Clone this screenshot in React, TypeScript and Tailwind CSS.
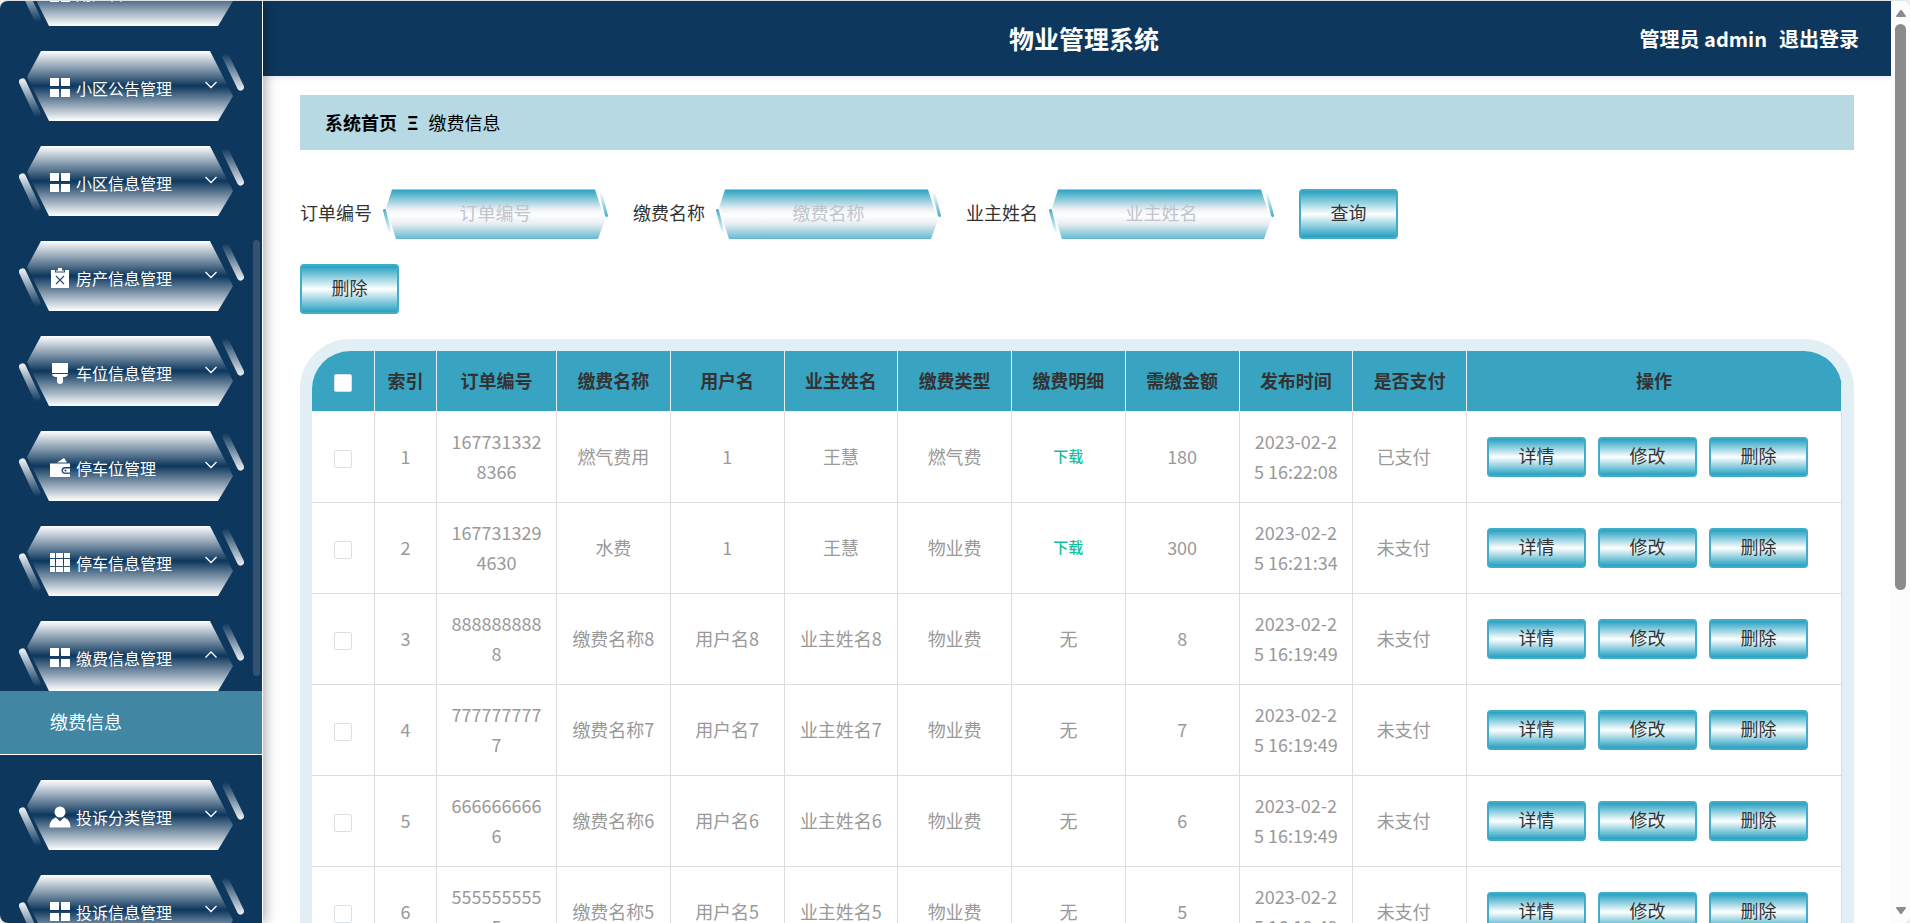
import React, { useState } from 'react';
import clsx from 'clsx';

type IconName = 'menu' | 'release' | 'brush' | 'wallet' | 'grid' | 'user';

interface MenuEntry {
  icon: IconName;
  label: string;
  children?: string[];
}

interface Payment {
  id: string;
  name: string;
  user: string;
  owner: string;
  type: string;
  file: boolean;
  amount: number;
  time: string;
  paid: string;
}

const menu: MenuEntry[] = [
  { icon: 'menu', label: '用户管理' },
  { icon: 'menu', label: '小区公告管理' },
  { icon: 'menu', label: '小区信息管理' },
  { icon: 'release', label: '房产信息管理' },
  { icon: 'brush', label: '车位信息管理' },
  { icon: 'wallet', label: '停车位管理' },
  { icon: 'grid', label: '停车信息管理' },
  { icon: 'menu', label: '缴费信息管理', children: ['缴费信息'] },
  { icon: 'user', label: '投诉分类管理' },
  { icon: 'menu', label: '投诉信息管理' },
];

const filler = (n: number): Payment => ({
  id: String(n).repeat(10),
  name: `缴费名称${n}`,
  user: `用户名${n}`,
  owner: `业主姓名${n}`,
  type: '物业费',
  file: false,
  amount: n,
  time: '2023-02-25 16:19:49',
  paid: '未支付',
});

const payments: Payment[] = [
  { id: '1677313328366', name: '燃气费用', user: '1', owner: '王慧', type: '燃气费', file: true, amount: 180, time: '2023-02-25 16:22:08', paid: '已支付' },
  { id: '1677313294630', name: '水费', user: '1', owner: '王慧', type: '物业费', file: true, amount: 300, time: '2023-02-25 16:21:34', paid: '未支付' },
  ...[8, 7, 6, 5].map(filler),
];

const columns = ['订单编号', '缴费名称', '用户名', '业主姓名', '缴费类型', '缴费明细', '需缴金额', '发布时间', '是否支付'];

const MenuIcon: React.FC<{ name: IconName }> = ({ name }) => (
  <svg className="relative h-[22px] w-[22px] shrink-0" viewBox="0 0 22 22" fill="#fff" aria-hidden="true">
    {name === 'menu' && <path d="M1 1h9v8H1zM12 1h9v8h-9zM1 12h9v8H1zM12 12h9v8h-9z" />}
    {name === 'grid' && (
      <path d="M1 1h5v5H1zM7 1h7v5H7zM15 1h6v5h-6zM1 7h5v7H1zM7 7h7v7H7zM15 7h6v7h-6zM1 15h5v5H1zM7 15h7v5H7zM15 15h6v5h-6z" />
    )}
    {name === 'release' && (
      <>
        <path d="M2 3h4v2.5h10V3h4v18H2z" />
        <path d="M7 3.500h2V1h4v2.500h2v1H7z" />
        <path d="M7 9l8 8M15 9l-8 8" stroke="#2c4f73" strokeWidth="1.2" />
      </>
    )}
    {name === 'brush' && <path d="M3 1h16v10H3zM3 12h16q-.3 2.700-3 3h-2v4a3 3 0 0 1-6 0v-4H6q-2.700-.3-3-3z" />}
    {name === 'wallet' && (
      <>
        <path d="M1 6.500h20v3.500h-5a3 3 0 0 0 0 7h5v3H1z" />
        <path d="M8 5.500L15 1l3 4.500z" />
        <path d="M16 11.500h5v4h-5a2 2 0 0 1 0-4z" />
        <circle cx="16.500" cy="13.500" r="1" fill="#1c4166" />
      </>
    )}
    {name === 'user' && (
      <>
        <circle cx="11" cy="6" r="5.500" />
        <path d="M0.500 21.500c0-6 3-9 6.500-10l4 4 4-4c3.500 1 6.500 4 6.500 10z" />
      </>
    )}
  </svg>
);

// Hexagon plate with a fading stroke on either side
const MenuPlate = () => (
  <svg className="absolute inset-0 h-full w-full" viewBox="0 0 225 70" preserveAspectRatio="none" aria-hidden="true">
    <defs>
      <linearGradient id="plate" x1="0" y1="0" x2="0" y2="1">
        <stop offset="0" stopColor="#fff" />
        <stop offset="0.5" stopColor="#0d375d" />
        <stop offset="1" stopColor="#fff" />
      </linearGradient>
      <linearGradient id="fadeDown" gradientUnits="userSpaceOnUse" x1="0" y1="28" x2="0" y2="66">
        <stop offset="0" stopColor="#eef1f4" />
        <stop offset="1" stopColor="#0d375d" />
      </linearGradient>
      <linearGradient id="fadeUp" gradientUnits="userSpaceOnUse" x1="0" y1="2" x2="0" y2="40">
        <stop offset="0" stopColor="#0d375d" />
        <stop offset="1" stopColor="#eef1f4" />
      </linearGradient>
    </defs>
    <path d="M22 0H191L214 45L199 70H30L8 26z" fill="url(#plate)" />
    <path d="M3.500 31L18 62" stroke="url(#fadeDown)" strokeWidth="7" strokeLinecap="round" />
    <path d="M207 6L221.500 36" stroke="url(#fadeUp)" strokeWidth="7" strokeLinecap="round" />
  </svg>
);

const SideMenu = () => (
  <aside className="relative z-10 w-[263px] shrink-0 overflow-hidden border-r border-white bg-[#0d375d] shadow-[2px_0_12px_rgba(0,0,0,0.35)]">
    <nav className="-mt-[45px]">
      {menu.map((item) => (
        <div key={item.label} className="mb-[25px]">
          <button type="button" className="relative ml-[19px] flex h-[70px] w-[225px] items-center gap-[5px] pl-[30px] pr-[27px] pt-1 text-base text-white">
            <MenuPlate />
            <MenuIcon name={item.icon} />
            <span className="relative flex-1 text-left">{item.label}</span>
            <svg className="relative -mt-1.5 h-2 w-3" viewBox="0 0 12 8" fill="none" stroke="#fff" strokeWidth="1.3" aria-hidden="true">
              <path d={item.children ? 'M0.500 6.500L6 1l5.500 5.500' : 'M0.500 1L6 6.500L11.500 1'} />
            </svg>
          </button>
          {item.children?.map((child) => (
            <a key={child} href="#" className="flex h-16 items-center border-b border-white bg-[#4186a3] pb-1 pl-[50px] text-lg text-white">
              {child}
            </a>
          ))}
        </div>
      ))}
    </nav>
    <div className="absolute right-[2px] top-[239px] h-[436px] w-[7px] rounded-full bg-[#36506f]" />
  </aside>
);

const GlossButton: React.FC<{ tall?: boolean; children: React.ReactNode }> = ({ tall, children }) => (
  <button
    type="button"
    className={clsx(
      'w-[99px] shrink-0 rounded border-2 border-[#41acc8] bg-[linear-gradient(#26a1c1,#fff,#26a1c1)] text-lg leading-none text-[#333]',
      tall ? 'h-[50px] pb-1' : 'h-10 pb-1',
    )}
  >
    {children}
  </button>
);

const SearchField: React.FC<{ label: string }> = ({ label }) => (
  <label className="flex items-center gap-[11px] text-lg text-[#333]">
    <span className="pb-1">{label}</span>
    <span className="relative block h-[50px] w-[225px]">
      <svg className="absolute inset-0 h-full w-full" viewBox="0 0 225 50" preserveAspectRatio="none" aria-hidden="true">
        <defs>
          <linearGradient id="field" x1="0" y1="0" x2="0" y2="1">
            <stop offset="0" stopColor="#28a2c2" />
            <stop offset="0.4" stopColor="#eef1f3" />
            <stop offset="0.52" stopColor="#fff" />
            <stop offset="0.7" stopColor="#e6edf1" />
            <stop offset="1" stopColor="#62b9d1" />
          </linearGradient>
          <linearGradient id="tickDown" gradientUnits="userSpaceOnUse" x1="0" y1="20" x2="0" y2="45">
            <stop offset="0" stopColor="#45aeca" />
            <stop offset="1" stopColor="#fff" />
          </linearGradient>
          <linearGradient id="tickUp" gradientUnits="userSpaceOnUse" x1="0" y1="3" x2="0" y2="28">
            <stop offset="0" stopColor="#fff" />
            <stop offset="1" stopColor="#45aeca" />
          </linearGradient>
        </defs>
        <path d="M9 0.500H212L222 31L215 50H13L3 19z" fill="url(#field)" />
        <path d="M1.500 21.500L7 43" stroke="url(#tickDown)" strokeWidth="3" strokeLinecap="round" />
        <path d="M218 5L223.500 26.500" stroke="url(#tickUp)" strokeWidth="3" strokeLinecap="round" />
      </svg>
      <input
        type="text"
        placeholder={label}
        className="relative block h-full w-full bg-transparent pb-1 text-center text-lg text-[#333] outline-none placeholder:text-[#c0c4cc]"
      />
    </span>
  </label>
);

const Check: React.FC<{ label: string; checked: boolean; onChange: () => void }> = ({ label, checked, onChange }) => (
  <input
    type="checkbox"
    aria-label={label}
    checked={checked}
    onChange={onChange}
    className="mx-auto mt-1.5 block h-[18px] w-[18px] appearance-none rounded-xs border border-[#dcdfe6] bg-white checked:bg-[#38a4c2]"
  />
);

const PaymentTable = () => {
  const [picked, setPicked] = useState<string[]>([]);
  const all = picked.length === payments.length;
  const toggle = (id: string) =>
    setPicked((prev) => (prev.includes(id) ? prev.filter((p) => p !== id) : [...prev, id]));

  return (
    <div className="mt-[25px] overflow-hidden rounded-[50px] border-[12px] border-[#e2eff4]">
      <table className="w-full table-fixed border-separate border-spacing-0 text-center text-lg leading-[30px] text-[#999]">
        <colgroup>
          <col className="w-[63px]" />
          <col className="w-[62px]" />
          <col className="w-[120px]" />
          {columns.slice(1).map((c) => (
            <col key={c} />
          ))}
          <col className="w-[375px]" />
        </colgroup>
        <thead>
          <tr className="h-[61px] bg-[#38a4c2] text-[#333] *:border-b *:border-r *:border-[#ebeef5] *:px-0 *:pb-0.5 *:pt-0 *:font-bold">
            <th>
              <Check label="全选" checked={all} onChange={() => setPicked(all ? [] : payments.map((p) => p.id))} />
            </th>
            <th>索引</th>
            {columns.map((c) => (
              <th key={c}>{c}</th>
            ))}
            <th>操作</th>
          </tr>
        </thead>
        <tbody>
          {payments.map((p, i) => (
            <tr key={p.id} className="h-[91px] *:break-all *:border-b *:border-r *:border-[#ddd] *:px-3 *:pb-0.5 *:pt-0">
              <td>
                <Check label={`选择 ${p.id}`} checked={picked.includes(p.id)} onChange={() => toggle(p.id)} />
              </td>
              <td>{i + 1}</td>
              <td>{p.id}</td>
              <td>{p.name}</td>
              <td>{p.user}</td>
              <td>{p.owner}</td>
              <td>{p.type}</td>
              <td>
                {p.file ? <a href="#" className="block text-[15px] font-medium leading-[30px] text-[#10c09c]">下载</a> : '无'}
              </td>
              <td>{p.amount}</td>
              <td>{p.time}</td>
              <td>
                <span className="mr-3">{p.paid}</span>
              </td>
              <td>
                <div className="flex gap-3 pl-2 pt-0.5">
                  <GlossButton>详情</GlossButton>
                  <GlossButton>修改</GlossButton>
                  <GlossButton>删除</GlossButton>
                </div>
              </td>
            </tr>
          ))}
        </tbody>
      </table>
    </div>
  );
};

const PageScrollbar = () => (
  <div className="flex w-[19px] shrink-0 flex-col items-center bg-[#fcfcfc] py-2" aria-hidden="true">
    <svg className="h-2 w-3" viewBox="0 0 12 8" fill="#8b8b8b">
      <path d="M5 1.500Q6 0 7 1.500L11 7Q11 8 10 8H2Q1 8 1 7z" />
    </svg>
    <div className="mt-[7px] h-[566px] w-[11px] rounded-full bg-[#8b8b8b]" />
    <svg className="mt-auto h-2 w-3" viewBox="0 0 12 8" fill="#8b8b8b">
      <path d="M5 6.500Q6 8 7 6.500L11 1Q11 0 10 0H2Q1 0 1 1z" />
    </svg>
  </div>
);

export default function App() {
  return (
    <div className="h-screen bg-[#eceeee] font-['Noto_Sans_CJK_SC',sans-serif]">
      <div className="flex h-full overflow-hidden rounded-lg border-t border-[#dfe3e4] bg-white">
        <SideMenu />
        <div className="min-w-0 flex-1 overflow-hidden">
          <header className="grid h-[75px] grid-cols-3 items-center bg-[#0d375d] pl-[46px] pr-8 font-bold text-white shadow-[0_1px_6px_#dde4f8]">
            <h1 className="col-start-2 text-center text-[25px]">物业管理系统</h1>
            <div className="flex justify-end gap-3 text-xl">
              <span>管理员 admin</span>
              <a href="#">退出登录</a>
            </div>
          </header>
          <main className="px-[37px] pt-[19px]">
            <div className="flex h-[55px] items-center gap-2.5 bg-[#b7d9e3] px-[25px] pb-0.5 text-lg text-black">
              <a href="#" className="font-bold">系统首页</a>
              <span className="font-bold">Ξ</span>
              <span>缴费信息</span>
            </div>
            <form className="mt-[39px] flex items-center gap-[25px]">
              <SearchField label="订单编号" />
              <SearchField label="缴费名称" />
              <SearchField label="业主姓名" />
              <GlossButton tall>查询</GlossButton>
            </form>
            <div className="mt-[25px]">
              <GlossButton tall>删除</GlossButton>
            </div>
            <PaymentTable />
          </main>
        </div>
        <PageScrollbar />
      </div>
    </div>
  );
}
